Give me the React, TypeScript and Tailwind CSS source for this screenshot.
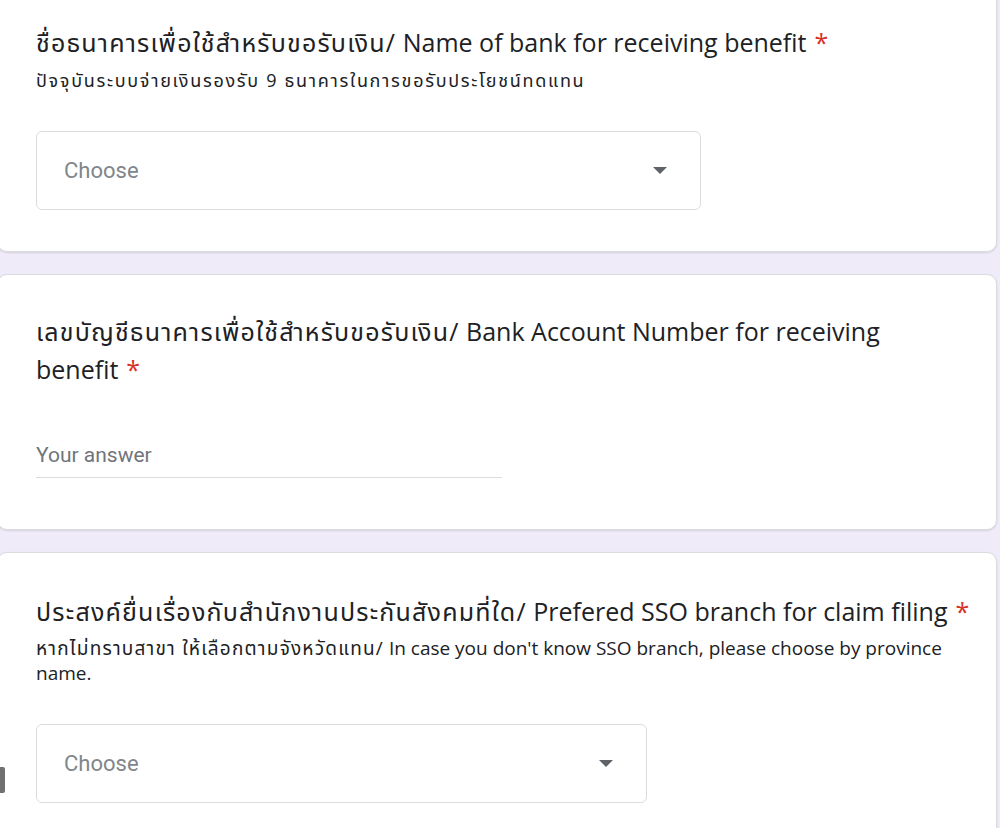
import React from "react";

const Star = () => <span className="ml-2 text-[#d93025]">*</span>;

const Th = ({ children, sp = "tracking-[1.2px]" }: { children: React.ReactNode; sp?: string }) => (
  <span className={sp}>{children}</span>
);

const Caret = () => (
  <svg width="14" height="7" viewBox="0 0 14 7" className="shrink-0">
    <path d="M0 0 L14 0 L7 7 Z" fill="#5f6368" />
  </svg>
);

const SelectBox = ({ width }: { width: string }) => (
  <div
    className={`${width} h-[79px] flex items-center justify-between pl-[27px] pr-[33px] border border-[#dadce0] rounded-md bg-white`}
  >
    <span className="text-[22px] text-[#80868b]" style={{ fontFamily: "Roboto, sans-serif" }}>
      Choose
    </span>
    <Caret />
  </div>
);

const Card = ({ children, className = "" }: { children: React.ReactNode; className?: string }) => (
  <div
    className={`bg-white rounded-[10px] ml-[-3px] mr-[3px] border border-[#dadce0] shadow-[0_1px_2px_rgba(60,64,67,0.15)] pl-[38px] pr-[20px] ${className}`}
  >
    {children}
  </div>
);

export default function App() {
  return (
    <div
      className="w-[1000px] h-[828px] overflow-hidden bg-[#f0ebf8] relative text-[#202124]"
      style={{ fontFamily: '"Open Sans", "Noto Sans Thai", "Noto Sans", Roboto, sans-serif' }}
    >
      <div className="flex flex-col gap-[22px] mt-[-12px]">
        <Card className="pt-[36px] pb-[41px]">
          <div className="text-[25px] leading-[34px]">
            <Th>ชื่อธนาคารเพื่อใช้สำหรับขอรับเงิน/</Th> Name of bank for receiving benefit
            <Star />
          </div>
          <div className="text-[18px] leading-[25px] mt-[9px]">
            <Th sp="tracking-[1.7px]">ปัจจุบันระบบจ่ายเงินรองรับ 9 ธนาคารในการขอรับประโยชน์ทดแทน</Th>
          </div>
          <div className="mt-[38px]">
            <SelectBox width="w-[665px]" />
          </div>
        </Card>

        <Card className="pt-[37px] pb-[51px]">
          <div className="text-[25px] leading-[38px] w-[900px]">
            <Th>เลขบัญชีธนาคารเพื่อใช้สำหรับขอรับเงิน/</Th> Bank Account Number for receiving benefit
            <Star />
          </div>
          <div className="mt-[53px] w-[466px] border-b border-[#dadce0] pb-[8px]">
            <span
              className="text-[21px] leading-[28px] text-[#70757a] block"
              style={{ fontFamily: "Roboto, sans-serif" }}
            >
              Your answer
            </span>
          </div>
        </Card>

        <Card className="pt-[41px] pb-[40px] min-h-[300px]">
          <div className="text-[25px] leading-[34px]">
            <Th>ประสงค์ยื่นเรื่องกับสำนักงานประกันสังคมที่ใด/</Th> Prefered SSO branch for claim filing
            <Star />
          </div>
          <div className="text-[19px] leading-[25px] mt-[8px] w-[925px]">
            <Th sp="tracking-[1.2px]">หากไม่ทราบสาขา ให้เลือกตามจังหวัดแทน/</Th> In case you don't know SSO branch, please
            choose by province name.
          </div>
          <div className="mt-[38px]">
            <SelectBox width="w-[611px]" />
          </div>
        </Card>
      </div>
      <div className="absolute left-0 top-[767px] w-[5px] h-[26px] bg-[#707070] rounded-r-[2px]" />
    </div>
  );
}
